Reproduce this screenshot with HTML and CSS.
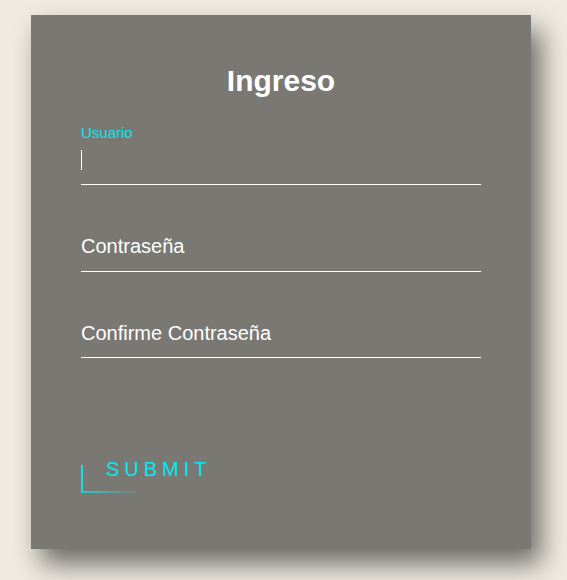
FILE: index.html
```html
<!DOCTYPE html>
<html lang="es">
<head>
<meta charset="utf-8">
<title>Ingreso</title>
<link rel="stylesheet" href="styles.css">
</head>
<body>
  <div class="login-box">
    <h2 class="title">Ingreso</h2>
    <form class="form">
      <div class="field">
        <label class="label label-active">Usuario</label>
        <div class="field-box"><div class="caret"></div></div>
      </div>
      <div class="field">
        <div class="field-box"><span class="label-text">Contraseña</span></div>
      </div>
      <div class="field">
        <div class="field-box"><span class="label-text">Confirme Contraseña</span></div>
      </div>
      <a class="submit">
        <span class="edge-left"></span>
        <span class="edge-bottom"></span>
        SUBMIT
      </a>
    </form>
  </div>
</body>
</html>
```

FILE: styles.css
```css
html, body {
  margin: 0;
  padding: 0;
}
body {
  background: #efebe1;
  font-family: "Liberation Sans", Arial, sans-serif;
  padding: 15px 0 0 31px;
  height: 580px;
  box-sizing: border-box;
  overflow: hidden;
}
.login-box {
  width: 500px;
  box-sizing: border-box;
  padding: 49px 50px 56px;
  background: #7a7873;
  box-shadow: 10px 15px 25px rgba(0, 0, 0, 0.55);
}
.title {
  margin: 0 0 38px;
  font-size: 30px;
  line-height: 34px;
  font-weight: bold;
  color: #fff;
  text-align: center;
}
.form {
  display: flex;
  flex-direction: column;
  align-items: flex-start;
}
.field {
  position: relative;
  width: 100%;
  margin-bottom: 37.5px;
}
.field-box {
  height: 49px;
  box-sizing: border-box;
  padding: 12.5px 0;
  border-bottom: 1px solid #fff;
  font-size: 20px;
  line-height: 23px;
  color: #fff;
}
.label {
  position: absolute;
  left: 0;
  top: -12px;
  font-size: 15px;
  line-height: 17px;
}
.label-active {
  color: #03e9f4;
}
.caret {
  width: 1px;
  height: 20px;
  margin-top: 1.5px;
  background: #fff;
}
.submit {
  position: relative;
  margin-top: 49.5px;
  padding: 12.5px 25px;
  font-size: 20px;
  line-height: 23px;
  letter-spacing: 5px;
  color: #03e9f4;
  text-decoration: none;
}
.edge-left {
  position: absolute;
  left: 0;
  bottom: 0;
  width: 2px;
  height: 28px;
  background: #18dfe6;
}
.edge-bottom {
  position: absolute;
  left: 0;
  bottom: 0;
  width: 62px;
  height: 2px;
  background: linear-gradient(90deg, #2fc8cc, rgba(3, 233, 244, 0));
}
```
